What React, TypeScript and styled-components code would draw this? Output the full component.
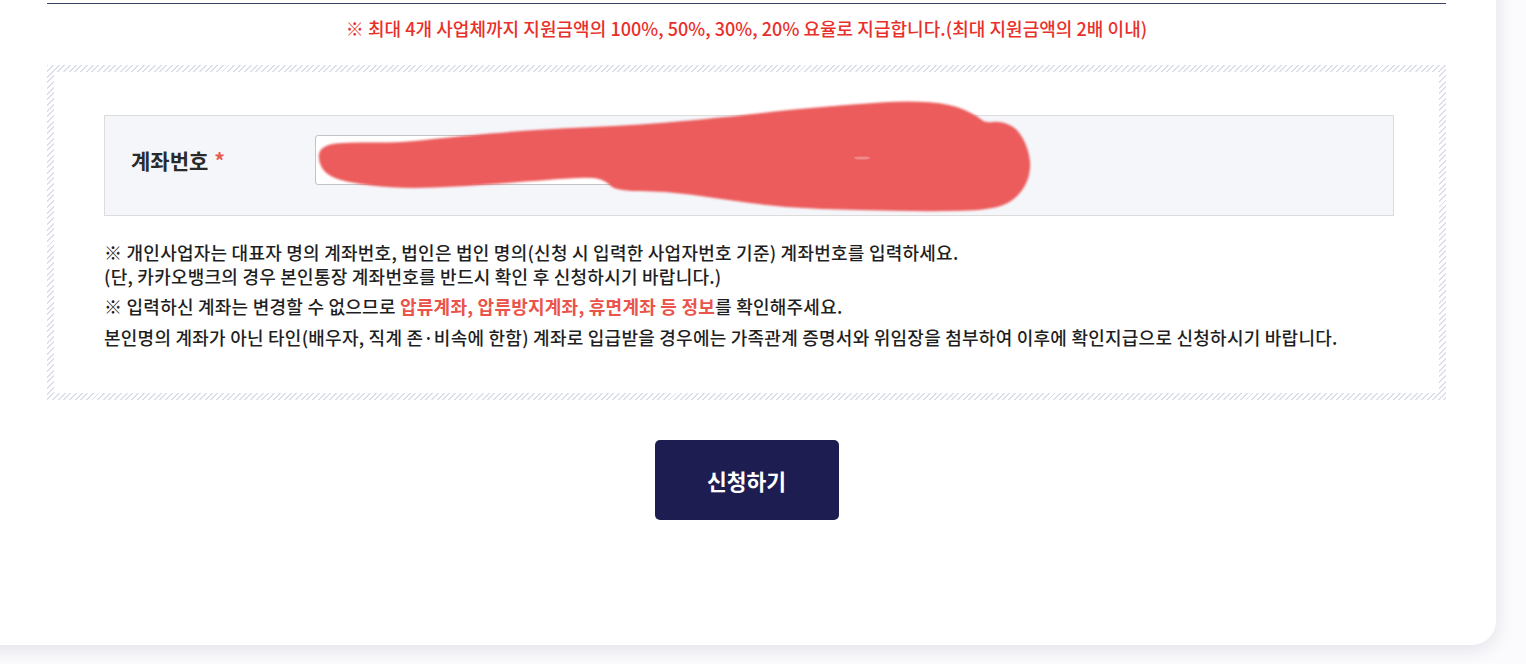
import React from "react";
import styled, { createGlobalStyle } from "styled-components";

const Global = createGlobalStyle`
  html, body { margin: 0; padding: 0; }
  body {
    background: #fbfbfd;
    font-family: "Noto Sans CJK KR", "Noto Sans", sans-serif;
    color: #222;
    overflow: hidden;
  }
  * { box-sizing: border-box; }
`;

const Page = styled.div`
  width: 1526px;
  height: 664px;
  padding: 0 30px 19px 0;
  overflow: hidden;
`;

const Card = styled.div`
  margin: -30px 0 0 -30px;
  background: #fff;
  border-radius: 0 0 24px 0;
  box-shadow: 0 4px 18px rgba(40, 40, 90, 0.13);
  padding: 33px 50px 125px 77px;
`;

const TopRule = styled.div`
  height: 1px;
  background: #3c4062;
`;

const Headline = styled.p`
  margin: 12px 0 0;
  text-align: center;
  color: #e8302a;
  font-size: 18px;
  font-weight: 500;
  line-height: 24px;
  letter-spacing: 0.04px;
`;

const HatchBox = styled.div`
  margin-top: 25px;
  padding: 7px;
  background: repeating-linear-gradient(
    135deg,
    #dcdfe9 0px,
    #dcdfe9 1.4px,
    #ffffff 1.4px,
    #ffffff 4px
  );
`;

const HatchInner = styled.div`
  background: #fff;
  padding: 43px 45px 44px 50px;
`;

const FieldRow = styled.div`
  position: relative;
  display: flex;
  align-items: center;
  background: #f5f6fa;
  border: 1px solid #dcdcdc;
  padding: 19px 26px 30px;
`;

const Label = styled.label`
  width: 184px;
  flex: none;
  font-size: 21px;
  font-weight: 700;
  color: #2a2a2a;
  letter-spacing: 0;
`;

const Star = styled.span`
  color: #ea5a50;
  margin-left: 6px;
`;

const Input = styled.input`
  width: 520px;
  height: 50px;
  border: 1px solid #c4c4c4;
  border-radius: 3px;
  background: #fff;
  outline: none;
`;

const Scribble = styled.svg`
  position: absolute;
  left: 196px;
  top: -25px;
  width: 760px;
  height: 130px;
  pointer-events: none;
`;

const Notes = styled.div`
  margin-top: 24px;
  font-size: 18px;
  font-weight: 500;
  color: #1f1f1f;
  letter-spacing: 0.24px;
`;

const Note = styled.p<{ $gap?: number }>`
  margin: ${(p) => p.$gap ?? 0}px 0 0;
  line-height: 24px;
`;

const Warn = styled.strong`
  color: #ea544b;
  font-weight: 700;
`;

const Actions = styled.div`
  display: flex;
  justify-content: center;
  margin-top: 40px;
`;

const Submit = styled.button`
  width: 184px;
  height: 80px;
  border: none;
  border-radius: 5px;
  background: #1e1d52;
  color: #fff;
  font-family: inherit;
  font-size: 21.5px;
  font-weight: 700;
  letter-spacing: 0;
  cursor: pointer;
`;

const blob: [number, number][] = [
  [319, 147], [336, 141], [397, 142], [446, 136.5], [533, 128.6], [640, 124],
  [737, 115], [785, 109], [858, 103], [907, 99.6], [950, 103], [975, 114],
  [984, 122], [999, 120], [1018, 128], [1030, 155.5], [1028, 180], [1013, 200],
  [989, 209], [931, 210.7], [858, 209], [785, 207], [713, 197], [664, 190],
  [615, 190], [605, 180], [591, 176], [543, 179], [470, 185], [397, 188],
  [344, 181], [324, 173], [317, 159],
];

function smoothPath(pts: [number, number][]): string {
  const n = pts.length;
  const mid = (a: [number, number], b: [number, number]) => [
    (a[0] + b[0]) / 2 - 300,
    (a[1] + b[1]) / 2 - 90,
  ];
  const start = mid(pts[n - 1], pts[0]);
  let d = `M${start[0].toFixed(1)} ${start[1].toFixed(1)}`;
  for (let i = 0; i < n; i++) {
    const c = pts[i];
    const m = mid(pts[i], pts[(i + 1) % n]);
    d += ` Q${(c[0] - 300).toFixed(1)} ${(c[1] - 90).toFixed(1)} ${m[0].toFixed(1)} ${m[1].toFixed(1)}`;
  }
  return d + " Z";
}

export default function App() {
  return (
    <>
      <Global />
      <Page>
        <Card>
          <TopRule />
          <Headline>
            ※ 최대 4개 사업체까지 지원금액의 100%, 50%, 30%, 20% 요율로 지급합니다.(최대 지원금액의 2배 이내)
          </Headline>
          <HatchBox>
            <HatchInner>
              <FieldRow>
                <Label htmlFor="acct">
                  계좌번호<Star>*</Star>
                </Label>
                <Input id="acct" type="text" />
                <Scribble viewBox="0 0 760 130">
                  <defs>
                    <filter id="soft" x="-5%" y="-10%" width="110%" height="120%">
                      <feGaussianBlur stdDeviation="0.8" />
                    </filter>
                  </defs>
                  <path d={smoothPath(blob)} fill="#ec5b5b" filter="url(#soft)" />
                  <ellipse cx="561" cy="67" rx="8" ry="1.6" fill="#f08a8a" />
                </Scribble>
              </FieldRow>
              <Notes>
                <Note>
                  ※ 개인사업자는 대표자 명의 계좌번호, 법인은 법인 명의(신청 시 입력한 사업자번호 기준) 계좌번호를 입력하세요.
                  <br />
                  (단, 카카오뱅크의 경우 본인통장 계좌번호를 반드시 확인 후 신청하시기 바랍니다.)
                </Note>
                <Note $gap={6}>
                  ※ 입력하신 계좌는 변경할 수 없으므로 <Warn>압류계좌, 압류방지계좌, 휴면계좌 등 정보</Warn>를 확인해주세요.
                </Note>
                <Note $gap={7}>
                  본인명의 계좌가 아닌 타인(배우자, 직계 존·비속에 한함) 계좌로 입급받을 경우에는 가족관계 증명서와 위임장을 첨부하여 이후에 확인지급으로 신청하시기 바랍니다.
                </Note>
              </Notes>
            </HatchInner>
          </HatchBox>
          <Actions>
            <Submit type="button">신청하기</Submit>
          </Actions>
        </Card>
      </Page>
    </>
  );
}
